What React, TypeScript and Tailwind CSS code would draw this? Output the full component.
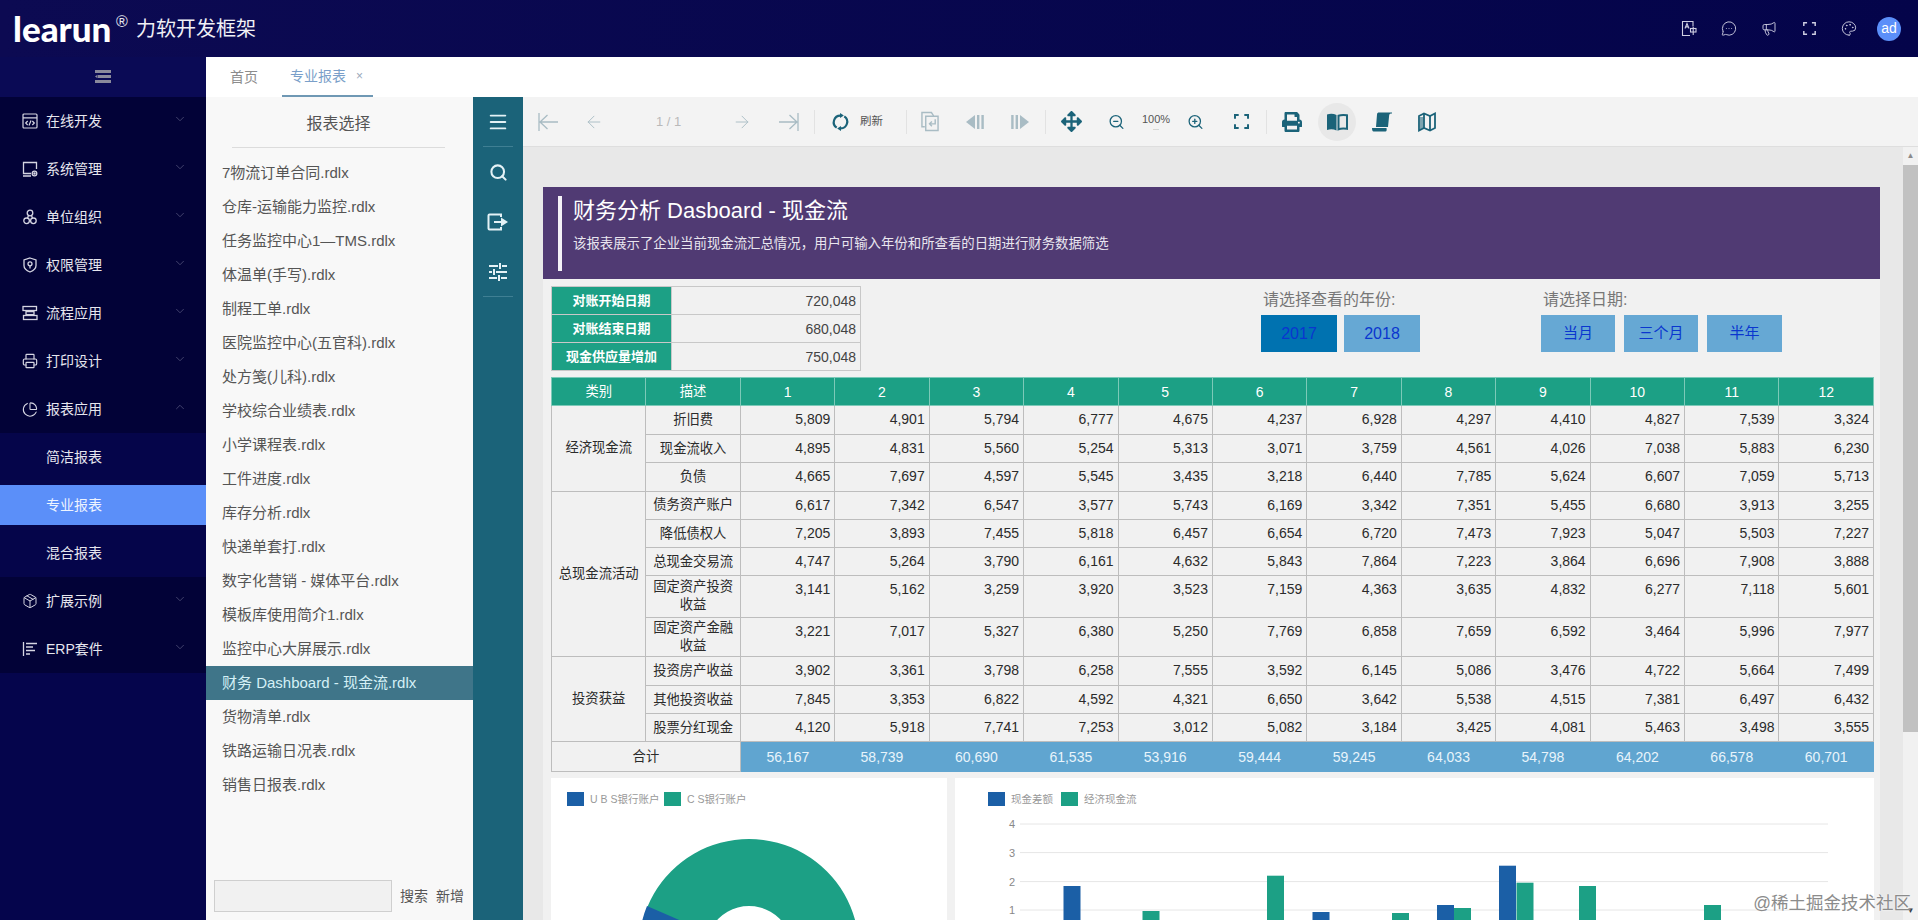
import React from 'react';
import {
  ChevronDown, ChevronUp, Printer, PieChart, Package, Menu, Search, SlidersHorizontal,
  ArrowLeft, ArrowRight, ZoomIn, ZoomOut,
  MessageCircleMore, Megaphone, Palette,
} from 'lucide-react';
import { FaPrint, FaArrowsAlt } from 'react-icons/fa';

const SANS = 'font-["Liberation_Sans","Noto_Sans_CJK_SC",sans-serif]';

const Corners = ({ size = 14, w = 2 }: { size?: number; w?: number }) => (
  <svg width={size} height={size} viewBox="0 0 16 16" fill="none" stroke="currentColor" strokeWidth={w}>
    <path d="M1 5V1h4M11 1h4v4M15 11v4h-4M5 15H1v-4" />
  </svg>
);

const CodeIcon = () => (
  <svg width="16" height="16" viewBox="0 0 16 16" fill="none" stroke="currentColor" strokeWidth="1.2">
    <rect x="1" y="1" width="14" height="14" rx="1" />
    <path d="M1 4.8h14M5.7 8l-2 2 2 2M10.3 8l2 2-2 2M9 7.5l-2 5" />
  </svg>
);
const MonitorIcon = () => (
  <svg width="16" height="16" viewBox="0 0 16 16" fill="none" stroke="currentColor" strokeWidth="1.3">
    <path d="M9 12.5H1.5v-11h13V8M1 15h8" />
    <circle cx="12.5" cy="12.5" r="2.3" />
    <circle cx="12.5" cy="12.5" r=".6" fill="currentColor" />
  </svg>
);
const OrgIcon = () => (
  <svg width="16" height="16" viewBox="0 0 16 16" fill="none" stroke="currentColor" strokeWidth="1.3">
    <circle cx="8" cy="4" r="2.8" />
    <circle cx="4.6" cy="11.8" r="2.8" />
    <circle cx="11.4" cy="11.8" r="2.8" />
    <path d="M6.5 6.5L5.5 9M9.5 6.5l1 2.5" />
  </svg>
);
const ShieldIcon = () => (
  <svg width="16" height="16" viewBox="0 0 16 16" fill="none" stroke="currentColor" strokeWidth="1.3">
    <path d="M8 1l6 2v5.5c0 3-2.6 5.2-6 6.5-3.4-1.3-6-3.5-6-6.5V3z" />
    <circle cx="8" cy="6.8" r="2" />
    <path d="M8 8.8v2.6" />
  </svg>
);
const FlowIcon = () => (
  <svg width="16" height="16" viewBox="0 0 16 16" fill="none" stroke="currentColor" strokeWidth="1.3">
    <rect x="1" y="1.5" width="13.5" height="4" />
    <rect x="4" y="6.6" width="8" height="3" />
    <rect x="1.5" y="10.5" width="13.5" height="4" />
  </svg>
);
const GanttIcon = () => (
  <svg width="16" height="16" viewBox="0 0 16 16" fill="none" stroke="currentColor" strokeWidth="1.3">
    <path d="M1.5 1v14M4 2.5h11M4 6h7M4 9.5h9M4 13h4" />
  </svg>
);
const DocLangIcon = () => (
  <svg width="17" height="17" viewBox="0 0 16 16" fill="none" stroke="currentColor" strokeWidth="1.1">
    <path d="M12 6V1H1.5v14H9" />
    <path d="M4 8l2-5 2 5M4.8 6.4h2.4" />
    <rect x="9.5" y="8" width="5.5" height="3.5" />
    <path d="M12.2 6.5v8" />
  </svg>
);
const FirstIcon = () => (
  <svg width="20" height="20" viewBox="0 0 20 20" fill="none" stroke="currentColor" strokeWidth="1.3">
    <path d="M1 1v18M20 10H2M9.5 3L2 10l7.5 7" />
  </svg>
);
const LastIcon = () => (
  <svg width="20" height="20" viewBox="0 0 20 20" fill="none" stroke="currentColor" strokeWidth="1.3">
    <path d="M19 1v18M0 10h18M10.5 3L18 10l-7.5 7" />
  </svg>
);
const SyncIcon = () => (
  <svg width="20" height="20" viewBox="0 0 20 20" fill="none" stroke="currentColor" strokeWidth="2.3">
    <path d="M10 3.2A7 7 0 0 0 6 16" />
    <path d="M10 16.8A7 7 0 0 0 14 4" />
    <path d="M9.5 0.5l4 2.7-4 2.7z" fill="currentColor" stroke="none" />
    <path d="M10.5 19.5l-4-2.7 4-2.7z" fill="currentColor" stroke="none" />
  </svg>
);
const ExportPage = () => (
  <svg width="19" height="21" viewBox="0 0 19 21" fill="none" stroke="currentColor" strokeWidth="1.5">
    <path d="M4 16H1V1h10l2 3v1" />
    <path d="M5 5h13v15H5z" />
    <path d="M15 8v5H9.5M11.5 10.5l-2.5 2.5 2.5 2.5" />
  </svg>
);
const PrevPage = () => (
  <svg width="20" height="20" viewBox="0 0 20 20" fill="currentColor">
    <path d="M10 3v14L1 10z" />
    <rect x="12" y="3" width="2.4" height="14" />
    <rect x="16.4" y="3" width="2.4" height="14" />
  </svg>
);
const NextPage = () => (
  <svg width="20" height="20" viewBox="0 0 20 20" fill="currentColor">
    <path d="M10 3v14l9-7z" />
    <rect x="1.2" y="3" width="2.4" height="14" />
    <rect x="5.6" y="3" width="2.4" height="14" />
  </svg>
);
const BookIcon = () => (
  <svg width="21" height="18" viewBox="0 0 21 18">
    <path fill="currentColor" d="M0 1.5c3-1 6.500-1 9.500.5v15.500c-3-1.500-6.500-1.500-9.500-.5z" />
    <path fill="none" stroke="currentColor" strokeWidth="2" d="M11.500 2.800c2.500-1 5-1 8.500-.5v13.500c-3.500-.5-6-.5-8.500.5z" />
  </svg>
);
const ScrollIcon = () => (
  <svg width="20" height="20" viewBox="0 0 20 20" fill="currentColor">
    <path d="M5 2.500C5 1 6 .5 7 .5h13v1c-1.500 0-2.500 0-2.800 1.500L16 15H4z" />
    <path d="M0 16h14.500c.5 2 0 3.500-1 3.500H1.500C.5 19.500 0 18 0 16z" />
  </svg>
);
const MapIcon = () => (
  <svg width="18" height="20" viewBox="0 0 18 20" fill="none" stroke="currentColor" strokeWidth="1.8">
    <path d="M1 4l5-2.500 6 2.500 5-2.500V16l-5 2.500L6 16l-5 2.500z" />
    <path d="M6 1.500V16M12 4v14.500" />
    <path d="M2 5h3.500v11L2 17.500z" fill="currentColor" stroke="none" opacity=".55" />
  </svg>
);
const ExitIcon = () => (
  <svg width="22" height="20" viewBox="0 0 22 20" fill="none" stroke="currentColor" strokeWidth="2">
    <path d="M14 5V2.500H2.500a1 1 0 0 0-1 1v13a1 1 0 0 0 1 1H14V15" />
    <path d="M7 10h8" />
    <path d="M14 5.500L21 10l-7 4.500z" fill="currentColor" stroke="none" />
  </svg>
);
const TuneIcon = () => (
  <svg width="20" height="20" viewBox="0 0 20 20" fill="none" stroke="currentColor" strokeWidth="2">
    <path d="M1 4h9M14 4h5M1 10h3M8 10h11M1 16h8M13 16h6M12 1v6M6 7v6M11 13v6" />
  </svg>
);

const menuTop: [React.ReactNode, string][] = [
  [<CodeIcon />, '在线开发'],
  [<MonitorIcon />, '系统管理'],
  [<OrgIcon />, '单位组织'],
  [<ShieldIcon />, '权限管理'],
  [<FlowIcon />, '流程应用'],
  [<Printer size={18} strokeWidth={1.8} />, '打印设计'],
];
const menuBottom: [React.ReactNode, string][] = [
  [<Package size={16} strokeWidth={1.5} />, '扩展示例'],
  [<GanttIcon />, 'ERP套件'],
];

const MenuRow = ({ icon, label, open }: { icon: React.ReactNode; label: string; open?: boolean }) => (
  <div className="flex h-12 items-center pl-[22px] text-[#e6e6ee]">
    <span className="flex w-4 shrink-0 justify-center text-[#d5d5e2]">{icon}</span>
    <span className="ml-2 text-sm">{label}</span>
    {open ? (
      <ChevronUp size={14} strokeWidth={1.3} className="mb-1 ml-auto mr-[19px] text-[#56567e]" />
    ) : (
      <ChevronDown size={14} strokeWidth={1.3} className="mb-1 ml-auto mr-[19px] text-[#56567e]" />
    )}
  </div>
);

const Sidebar = () => (
  <aside className="flex w-[206px] shrink-0 flex-col bg-[#05054c]">
    <div className="flex h-10 shrink-0 items-center justify-center bg-[#0a0a55]">
      <svg width="16" height="14" viewBox="0 0 16 14" fill="#8a8a9c">
        <rect x="0" y="0" width="16" height="3" />
        <rect x="3" y="5" width="13" height="3" />
        <rect x="0" y="10" width="16" height="3" />
        <path d="M0 6.500L2.500 4.800v3.400z" />
      </svg>
    </div>
    <div className="bg-[#020237]">
      {menuTop.map(([i, l]) => (
        <MenuRow key={l} icon={i} label={l} />
      ))}
      <MenuRow icon={<PieChart size={17} strokeWidth={1.6} />} label="报表应用" open />
    </div>
    <div className="bg-[#05054a] text-sm text-[#e6e6ee]">
      <div className="flex h-12 items-center pl-[46px]">简洁报表</div>
      <div className="flex h-12 items-center">
        <div className="flex h-10 w-full items-center bg-[#5b8ff9] pl-[46px] text-[#eef4ff]">专业报表</div>
      </div>
      <div className="flex h-12 items-center pl-[46px]">混合报表</div>
    </div>
    <div className="bg-[#020237]">
      {menuBottom.map(([i, l]) => (
        <MenuRow key={l} icon={i} label={l} />
      ))}
    </div>
  </aside>
);

const Header = () => (
  <header className="flex h-[57px] shrink-0 items-center bg-gradient-to-r from-[#0c0a52] to-[#04044a] text-white">
    <div className="relative ml-[13px] flex h-[57px] w-[104px] items-center">
      <span className='font-["Lato",sans-serif] text-[35px] font-black leading-none'>learun</span>
      <span className="absolute left-[103px] top-[14px] text-[16px] leading-none text-[#e8e8f0]">®</span>
    </div>
    <span className="ml-[19px] text-[20px] text-[#f0f0f5]">力软开发框架</span>
    <div className="ml-auto mr-[17px] flex items-center text-[#cfcfe2]">
      <span className="flex w-4 justify-center"><DocLangIcon /></span>
      <span className="ml-6 flex w-4 justify-center"><MessageCircleMore size={19} strokeWidth={1.4} /></span>
      <span className="ml-6 flex w-4 justify-center"><Megaphone size={19} strokeWidth={1.4} /></span>
      <span className="ml-6 flex w-4 justify-center"><Corners size={13} w={1.8} /></span>
      <span className="ml-6 flex w-4 justify-center"><Palette size={19} strokeWidth={1.4} /></span>
      <span className="ml-[20px] flex h-6 w-6 items-center justify-center rounded-full bg-[#5b8ff9] text-[14px] text-white">ad</span>
    </div>
  </header>
);

const Tabs = () => (
  <div className="flex h-10 shrink-0 bg-white text-sm">
    <div className="ml-[24px] flex items-center text-[#8c8c8c]">首页</div>
    <div className="ml-[24px] flex w-[91px] items-center border-b-2 border-[#6f98b4] pb-[1px] pl-[8px] text-[#7a9fc9]">
      专业报表
      <span className="ml-[10px] text-xs text-[#9aa8bb]">×</span>
    </div>
  </div>
);

const files = [
  '7物流订单合同.rdlx', '仓库-运输能力监控.rdlx', '任务监控中心1—TMS.rdlx', '体温单(手写).rdlx', '制程工单.rdlx',
  '医院监控中心(五官科).rdlx', '处方笺(儿科).rdlx', '学校综合业绩表.rdlx', '小学课程表.rdlx', '工件进度.rdlx',
  '库存分析.rdlx', '快递单套打.rdlx', '数字化营销 - 媒体平台.rdlx', '模板库使用简介1.rdlx', '监控中心大屏展示.rdlx',
  '财务 Dashboard - 现金流.rdlx', '货物清单.rdlx', '铁路运输日况表.rdlx', '销售日报表.rdlx',
];

const FileList = () => (
  <div className="flex w-[267px] shrink-0 flex-col bg-[#f8f8f8] text-[#555]">
    <div className="mx-[26px] mr-[28px] flex h-[51px] shrink-0 items-center justify-center border-b border-[#dcdcdc] pt-[3px] text-base">报表选择</div>
    <div className="mt-2">
      {files.map((f, i) => (
        <div
          key={f}
          className={
            i === 15
              ? 'flex h-[34px] items-center bg-[#3f7589] pl-4 text-[15px] text-[#d4f0f6]'
              : 'flex h-[34px] items-center pl-4 text-[15px]'
          }
        >
          {f}
        </div>
      ))}
    </div>
    <div className="mb-[8px] ml-2 mt-auto flex items-center text-sm">
      <div className="h-[32px] w-[178px] border border-[#cfcfcf] bg-[#f1f1f1]" />
      <span className="ml-2">搜索</span>
      <span className="ml-2">新增</span>
    </div>
  </div>
);

const TealBar = () => (
  <div className="flex w-[50px] shrink-0 flex-col items-center bg-[#1b6379] text-[#e4f2f6]">
    <div className="flex h-[50px] w-[30px] shrink-0 items-center justify-center border-b border-[#3f7f93]"><Menu size={22} strokeWidth={2} /></div>
    <div className="flex h-[50px] shrink-0 items-center justify-center"><Search size={19} strokeWidth={2.6} /></div>
    <div className="flex h-[50px] shrink-0 items-center justify-center"><ExitIcon /></div>
    <div className="flex h-[50px] w-[30px] shrink-0 items-center justify-center border-b border-[#3f7f93]"><TuneIcon /></div>
  </div>
);

const Div = ({ cls }: { cls: string }) => <span className={`h-6 w-px shrink-0 bg-[#e2e2e2] ${cls}`} />;

const Toolbar = () => (
  <div className="flex h-[50px] shrink-0 items-center border-b border-[#dedede] bg-[#f3f3f3] text-[#1b6379]">
    <span className="ml-[15px] flex w-[20px] justify-center text-[#a9bcc4]"><FirstIcon /></span>
    <span className="ml-[26px] flex w-[20px] justify-center text-[#a9bcc4]"><ArrowLeft size={24} strokeWidth={1.1} /></span>
    <span className="ml-[52px] w-[23px] whitespace-nowrap text-center text-[13px] text-[#b9b9b9]">1 / 1</span>
    <span className="ml-[53px] flex w-[20px] justify-center text-[#a9bcc4]"><ArrowRight size={24} strokeWidth={1.1} /></span>
    <span className="ml-[27px] flex w-[20px] justify-center text-[#a9bcc4]"><LastIcon /></span>
    <Div cls="ml-[15px]" />
    <span className="ml-[16px] flex w-[19px] justify-center"><SyncIcon /></span>
    <span className="ml-[10px] w-[23px] text-[11.5px] text-[#555]">刷新</span>
    <Div cls="ml-[23px]" />
    <span className="ml-[14px] flex w-[18px] justify-center text-[#a9bcc4]"><ExportPage /></span>
    <span className="ml-[26px] flex w-[20px] justify-center text-[#a9bcc4]"><PrevPage /></span>
    <span className="ml-[24px] flex w-[21px] justify-center text-[#a9bcc4]"><NextPage /></span>
    <Div cls="ml-[15px]" />
    <span className="ml-[14px] flex w-[22px] justify-center"><FaArrowsAlt size={21} /></span>
    <span className="ml-[26px] flex w-[17px] justify-center"><ZoomOut size={22} strokeWidth={1.8} /></span>
    <span className="ml-[17px] flex w-[28px] flex-col items-center text-[11px] leading-[12px] text-[#555]">
      100%
      <span className="text-[7px] leading-[5px] text-[#888]">...</span>
    </span>
    <span className="ml-[17px] flex w-[17px] justify-center"><ZoomIn size={22} strokeWidth={1.8} /></span>
    <span className="ml-[30px] flex w-[15px] justify-center"><Corners size={15} w={2.2} /></span>
    <Div cls="ml-[17px]" />
    <span className="ml-[15px] flex w-[20px] justify-center"><FaPrint size={20} /></span>
    <span className="ml-[16px] flex h-[38px] w-[38px] items-center justify-center rounded-full bg-[#e8e8e8]"><BookIcon /></span>
    <span className="ml-[16px] flex w-[20px] justify-center"><ScrollIcon /></span>
    <span className="ml-[26px] flex w-[18px] justify-center"><MapIcon /></span>
  </div>
);

type Row = { cat?: string; span?: number; d: string; h: string; v: string[] };
const rows: Row[] = [
  { cat: '经济现金流', span: 3, d: '折旧费', h: 'h-[29px]', v: '5,809 4,901 5,794 6,777 4,675 4,237 6,928 4,297 4,410 4,827 7,539 3,324'.split(' ') },
  { d: '现金流收入', h: 'h-[28px]', v: '4,895 4,831 5,560 5,254 5,313 3,071 3,759 4,561 4,026 7,038 5,883 6,230'.split(' ') },
  { d: '负债', h: 'h-[28.5px]', v: '4,665 7,697 4,597 5,545 3,435 3,218 6,440 7,785 5,624 6,607 7,059 5,713'.split(' ') },
  { cat: '总现金流活动', span: 5, d: '债务资产账户', h: 'h-[28.5px]', v: '6,617 7,342 6,547 3,577 5,743 6,169 3,342 7,351 5,455 6,680 3,913 3,255'.split(' ') },
  { d: '降低债权人', h: 'h-[28px]', v: '7,205 3,893 7,455 5,818 6,457 6,654 6,720 7,473 7,923 5,047 5,503 7,227'.split(' ') },
  { d: '总现金交易流', h: 'h-[28px]', v: '4,747 5,264 3,790 6,161 4,632 5,843 7,864 7,223 3,864 6,696 7,908 3,888'.split(' ') },
  { d: '固定资产投资收益', h: 'h-[41.5px]', v: '3,141 5,162 3,259 3,920 3,523 7,159 4,363 3,635 4,832 6,277 7,118 5,601'.split(' ') },
  { d: '固定资产金融收益', h: 'h-[39.5px]', v: '3,221 7,017 5,327 6,380 5,250 7,769 6,858 7,659 6,592 3,464 5,996 7,977'.split(' ') },
  { cat: '投资获益', span: 3, d: '投资房产收益', h: 'h-[29px]', v: '3,902 3,361 3,798 6,258 7,555 3,592 6,145 5,086 3,476 4,722 5,664 7,499'.split(' ') },
  { d: '其他投资收益', h: 'h-[28px]', v: '7,845 3,353 6,822 4,592 4,321 6,650 3,642 5,538 4,515 7,381 6,497 6,432'.split(' ') },
  { d: '股票分红现金', h: 'h-[28px]', v: '4,120 5,918 7,741 7,253 3,012 5,082 3,184 3,425 4,081 5,463 3,498 3,555'.split(' ') },
];
const totals = '56,167 58,739 60,690 61,535 53,916 59,444 59,245 64,033 54,798 64,202 66,578 60,701'.split(' ');

const DataTable = () => (
  <table className="mt-[6px] ml-2 w-[1323px] table-fixed border-collapse text-[#2b2b2b]">
    <thead>
      <tr className="h-[28px] bg-[#1ca085] text-white">
        <th className="border border-[#7cc9b8] text-[13.33px] font-normal">类别</th>
        <th className="border border-[#7cc9b8] text-[13.33px] font-normal">描述</th>
        {Array.from({ length: 12 }, (_, i) => (
          <th key={i} className="border border-[#7cc9b8] text-sm font-normal">{i + 1}</th>
        ))}
      </tr>
    </thead>
    <tbody>
      {rows.map((r) => (
        <tr key={r.d} className={r.h}>
          {r.cat && (
            <td rowSpan={r.span} className="border border-[#bdbdbd] text-center text-[13.33px]">{r.cat}</td>
          )}
          <td className="border border-[#bdbdbd] px-[6px] py-0 text-center text-[13.33px] leading-[18px]">{r.d}</td>
          {r.v.map((n, i) => (
            <td key={i} className="border border-[#bdbdbd] pr-1 pt-[3px] text-right align-top text-sm leading-5">{n}</td>
          ))}
        </tr>
      ))}
      <tr className="h-[30px]">
        <td colSpan={2} className="border border-[#bdbdbd] text-center text-[13.33px]">合计</td>
        {totals.map((n) => (
          <td key={n} className="bg-[#60a5d0] text-center text-sm text-[#e8f4fb]">{n}</td>
        ))}
      </tr>
    </tbody>
  </table>
);

const summary: [string, string][] = [
  ['对账开始日期', '720,048'],
  ['对账结束日期', '680,048'],
  ['现金供应量增加', '750,048'],
];

const Legend = ({ cls, color, label, w }: { cls: string; color: string; label: string; w: string }) => (
  <>
    <span className={`h-[14px] w-[17px] shrink-0 ${color} ${cls}`} />
    <span className={`ml-[6px] shrink-0 whitespace-nowrap text-[10.5px] leading-[14px] text-[#999] ${w}`}>{label}</span>
  </>
);

const bars: [number, number, string][] = [
  [1063.5, 886, '#1b5fa6'], [1142.5, 911, '#1ca085'], [1267, 875.7, '#1ca085'], [1312.5, 912, '#1b5fa6'],
  [1392, 913, '#1ca085'], [1437, 905, '#1b5fa6'], [1454, 908, '#1ca085'], [1499, 865.7, '#1b5fa6'],
  [1516.5, 882.7, '#1ca085'], [1579, 886, '#1ca085'], [1704, 905, '#1ca085'],
];

const Charts = () => (
  <div className="ml-2 mt-[6px] flex h-[300px] w-[1323px] gap-[8px] text-[#999]">
    <div className="flex w-[396px] shrink-0 flex-col bg-white pl-4 pt-[14px]">
      <div className="flex">
        <Legend cls="" color="bg-[#1b5fa6]" label="U B S银行账户" w="w-[68px]" />
        <Legend cls="ml-[6px]" color="bg-[#1ca085]" label="C S银行账户" w="w-[60px]" />
      </div>
      <svg width="380" height="260" className="-ml-4 mt-[4px]" viewBox="0 33 380 260">
        <path fillRule="evenodd" fill="#1ca085" d="M198 62a110 110 0 1 1-.01 0zM198 129a43 43 0 1 0 .01 0z" />
        <path fill="#1b5fa6" d="M96 129A110 110 0 0 0 88 172h67a43 43 0 0 1 3.200-16z" />
      </svg>
    </div>
    <div className="flex w-[919px] shrink-0 flex-col bg-white pl-[33px] pt-[14px]">
      <div className="flex">
        <Legend cls="" color="bg-[#1b5fa6]" label="现金差额" w="w-[44px]" />
        <Legend cls="ml-[6px]" color="bg-[#1ca085]" label="经济现金流" w="w-[56px]" />
      </div>
      <svg width="886" height="260" className="mt-[4px]" viewBox="988 810 886 260">
        {[[4, 824], [3, 852.6], [2, 881.6], [1, 910]].map(([n, y]) => (
          <g key={n}>
            <line x1="1020" x2="1828" y1={y} y2={y} stroke="#e6e6e6" />
            <text x="1012" y={y + 4} fontSize="11" fill="#888" textAnchor="middle" fontFamily="Liberation Sans">{n}</text>
          </g>
        ))}
        {bars.map(([x, y, c]) => (
          <rect key={x} x={x} y={y} width="17" height={960 - y} fill={c} />
        ))}
      </svg>
    </div>
  </div>
);

const Viewer = () => (
  <div className="relative flex min-h-0 flex-1 overflow-hidden bg-[#e8e8e8]">
    <div className="min-w-0 flex-1 pl-5 pr-[23px] pt-10">
      <div className="h-[800px] w-[1337px] bg-[#f1f1f1]">
        <div className="flex h-[92px] bg-[#503a73] pl-[15px] pt-[9px] text-white">
          <span className="h-[75px] w-1 shrink-0 bg-[#f4f2f7]" />
          <div className="ml-[11px]">
            <div className="pt-[1px] text-[22px] leading-7">财务分析 Dasboard - 现金流</div>
            <div className="mt-[9px] text-[13.4px] leading-5 text-[#e9e6ef]">该报表展示了企业当前现金流汇总情况，用户可输入年份和所查看的日期进行财务数据筛选</div>
          </div>
        </div>
        <div className="flex h-[92px] pl-2 pt-[7px]">
          <table className="h-[85px] w-[310px] table-fixed border-collapse text-[#444]">
            <tbody>
              {summary.map(([a, b]) => (
                <tr key={a}>
                  <td className="w-[120px] border border-[#c8c8c8] bg-[#1ca085] text-center text-[13px] font-bold text-white">{a}</td>
                  <td className="border border-[#c8c8c8] pr-1 text-right text-sm">{b}</td>
                </tr>
              ))}
            </tbody>
          </table>
          <div className="ml-[400px] w-[170px]">
            <div className="flex h-[28px] items-center pl-[2px] text-base text-[#777]">请选择查看的年份:</div>
            <div className="mt-[1px] flex h-[37px] gap-[7px] text-base text-[#0a36cf]">
              <div className="flex w-[76px] items-center justify-center bg-[#0072b0]">2017</div>
              <div className="flex w-[76px] items-center justify-center bg-[#66a8d4]">2018</div>
            </div>
          </div>
          <div className="ml-[110px] w-[250px]">
            <div className="flex h-[28px] items-center pl-[2px] text-base text-[#777]">请选择日期:</div>
            <div className="mt-[1px] flex h-[37px] gap-[9px] text-[15px] text-[#0a36cf]">
              <div className="flex w-[74px] items-center justify-center bg-[#66a8d4]">当月</div>
              <div className="flex w-[74px] items-center justify-center bg-[#66a8d4]">三个月</div>
              <div className="flex w-[75px] items-center justify-center bg-[#66a8d4]">半年</div>
            </div>
          </div>
        </div>
        <DataTable />
        <Charts />
      </div>
    </div>
    <div className="flex w-[15px] shrink-0 flex-col bg-[#f1f1f1]">
      <div className="flex h-[18px] shrink-0 items-center justify-center text-[8px] leading-none text-[#8a8a8a]">▲</div>
      <div className="h-[567px] w-full bg-[#c1c1c1]" />
      <div className="mt-auto flex h-[18px] shrink-0 items-center justify-center text-[8px] leading-none text-[#333]">▼</div>
    </div>
    <span className="absolute bottom-[5px] right-[7px] whitespace-nowrap text-[17.5px] leading-6 text-[#8b8b8b] [text-shadow:0_0_2px_#fff]">@稀土掘金技术社区</span>
  </div>
);

export default function App() {
  return (
    <div className={`flex h-[920px] w-[1918px] flex-col overflow-hidden bg-[#05054c] ${SANS}`}>
      <Header />
      <div className="flex min-h-0 flex-1">
        <Sidebar />
        <div className="flex min-w-0 flex-1 flex-col">
          <Tabs />
          <div className="flex min-h-0 flex-1">
            <FileList />
            <TealBar />
            <div className="flex min-w-0 flex-1 flex-col bg-[#1b6379]">
              <Toolbar />
              <Viewer />
            </div>
          </div>
        </div>
      </div>
    </div>
  );
}
